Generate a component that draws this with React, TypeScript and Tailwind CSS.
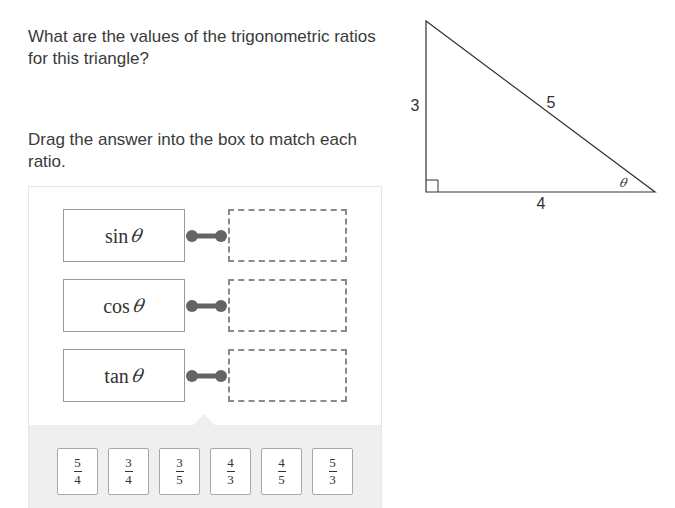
import React from "react";

const ratios = ["sin", "cos", "tan"];
const fracs: [string, string][] = [
  ["5", "4"],
  ["3", "4"],
  ["3", "5"],
  ["4", "3"],
  ["4", "5"],
  ["5", "3"],
];

function Connector() {
  return (
    <svg width="43" height="14" viewBox="0 0 43 14" className="block shrink-0">
      <line x1="7" y1="7" x2="36" y2="7" stroke="#646464" strokeWidth="5" />
      <circle cx="7" cy="7" r="6" fill="#646464" />
      <circle cx="36" cy="7" r="6" fill="#646464" />
    </svg>
  );
}

export default function App() {
  return (
    <div
      className="flex bg-white w-[675px] h-[508px] overflow-hidden text-[#333]"
      style={{ fontFamily: '"Liberation Sans", Arial, sans-serif' }}
    >
      <div className="w-[382px] shrink-0 pl-[28px] pt-[26px]">
        <p className="w-[354px] text-[17px] leading-[22px] text-[#3a3a3a]">
          What are the values of the trigonometric ratios for this triangle?
        </p>
        <p className="w-[354px] mt-[59px] text-[17px] leading-[22px] text-[#3a3a3a]">
          Drag the answer into the box to match each ratio.
        </p>
        <div className="mt-[13px] w-[354px] border border-[#e6e6e6] border-b-0">
          <div className="flex flex-col gap-[17px] pl-[34px] pt-[22px] pb-[23px]">
            {ratios.map((r) => (
              <div key={r} className="flex items-center">
                <div
                  className="w-[122px] h-[53px] border border-[#999] flex items-center justify-center text-[20px] text-[#333]"
                  style={{ fontFamily: '"Liberation Serif", "Times New Roman", serif' }}
                >
                  <span>{r}</span>
                  <span
                    className="inline-block italic ml-[4px] -skew-x-12"
                    style={{ fontFamily: '"DejaVu Serif", serif', fontSize: "18px" }}
                  >
                    θ
                  </span>
                </div>
                <Connector />
                <div className="w-[119px] h-[53px] border-2 border-dashed border-[#8a8a8a]" />
              </div>
            ))}
          </div>
          <div className="relative bg-[#efefef] h-[92px] flex gap-[10px] pl-[28px] pt-[23px]">
            <div className="absolute left-[164px] -top-[11px] w-0 h-0 border-l-[11px] border-r-[11px] border-b-[11px] border-l-transparent border-r-transparent border-b-[#efefef]" />
            {fracs.map(([n, d], i) => (
              <div
                key={i}
                className="w-[41px] h-[47px] bg-white border border-[#a8a8a8] rounded-[2px] flex items-center justify-center"
                style={{ fontFamily: '"Liberation Serif", "Times New Roman", serif' }}
              >
                <div className="flex flex-col items-center text-[13px] leading-[12px] text-[#333]">
                  <span>{n}</span>
                  <span className="block w-[8px] h-[1px] bg-[#333] my-[2px]" />
                  <span>{d}</span>
                </div>
              </div>
            ))}
          </div>
        </div>
      </div>
      <svg
        width="293"
        height="220"
        viewBox="382 0 293 220"
        className="block shrink-0"
      >
        <polygon
          points="426,21 426,192 655,192"
          fill="none"
          stroke="#333"
          strokeWidth="1.2"
        />
        <polyline points="426,180 438,180 438,192" fill="none" stroke="#333" strokeWidth="1" />
        <text x="415" y="111" fontSize="16" textAnchor="middle" fill="#333" fontFamily="Liberation Sans, Arial, sans-serif">3</text>
        <text x="551" y="108" fontSize="16" textAnchor="middle" fill="#333" fontFamily="Liberation Sans, Arial, sans-serif">5</text>
        <text x="541" y="209" fontSize="16" textAnchor="middle" fill="#333" fontFamily="Liberation Sans, Arial, sans-serif">4</text>
        <text x="623" y="187" fontSize="12" fontStyle="italic" textAnchor="middle" fill="#333" fontFamily="DejaVu Serif, serif" transform="skewX(-12) translate(39.7 0)">θ</text>
      </svg>
    </div>
  );
}
